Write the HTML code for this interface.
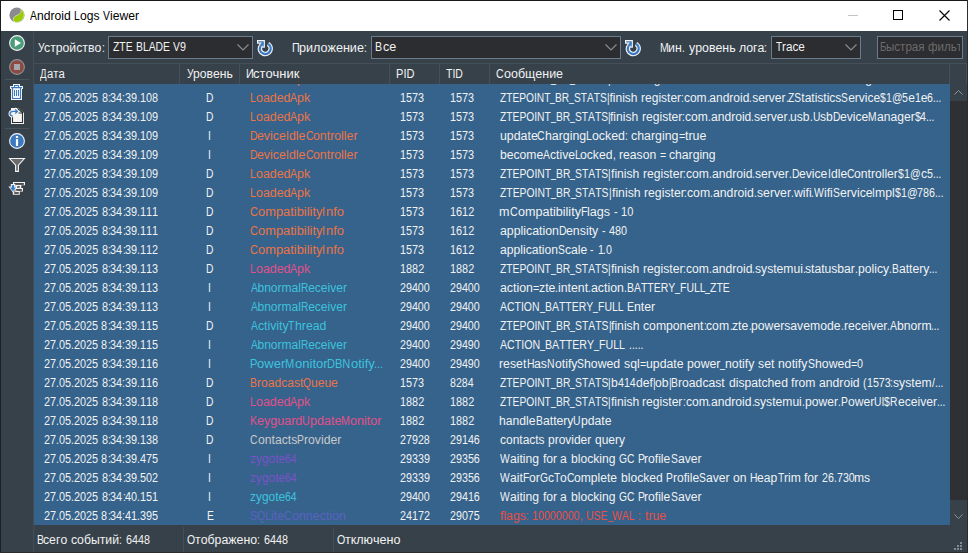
<!DOCTYPE html>
<html><head><meta charset="utf-8">
<style>
html,body{margin:0;padding:0}
body{width:968px;height:553px;overflow:hidden;position:relative;background:#37414a;font-family:"Liberation Sans",sans-serif;font-size:12px}
.r{position:absolute}
.t{position:absolute;white-space:pre;line-height:30px;height:30px;transform-origin:0 0;font-size:12px;font-kerning:none;font-variant-ligatures:none}
.g{position:absolute;left:0;top:0}
.clip{position:absolute;overflow:hidden}
svg{position:absolute;overflow:visible}
</style></head><body>
<!-- title bar -->
<div class="r" style="left:0;top:0;width:968px;height:31px;background:#fff"></div>
<!-- borders -->
<div class="r" style="left:0;top:0;width:968px;height:1px;background:#16191c"></div>
<div class="r" style="left:0;top:0;width:1px;height:553px;background:#1c1f22"></div>
<div class="r" style="left:967px;top:0;width:1px;height:553px;background:#2a2c2f"></div>
<div class="r" style="left:0;top:552px;width:968px;height:1px;background:#2a2c2f"></div>
<!-- title icon -->
<svg style="left:9px;top:7px" width="16" height="16" viewBox="0 0 16 16">
 <circle cx="8" cy="8" r="7.6" fill="#8b8b8f"/>
 <path d="M10.9 0.9 C12.8 2.6 12.6 6.0 9.8 7.4 C7.2 8.6 4.2 9.8 4.4 12.2 C4.5 13.4 4.9 14.3 5.4 15.0 A7.6 7.6 0 0 0 10.9 0.9 Z" fill="#99cc00" stroke="#ffffff" stroke-width="0.5"/>
</svg>
<!-- window controls -->
<div class="r" style="left:848px;top:15px;width:10px;height:1px;background:#c4c4c4"></div>
<div class="r" style="left:893px;top:10px;width:8px;height:8px;border:1px solid #000"></div>
<svg style="left:939px;top:10px" width="11" height="11" viewBox="0 0 11 11"><path d="M0.5 0.5 L10.5 10.5 M10.5 0.5 L0.5 10.5" stroke="#000" stroke-width="1.1"/></svg>

<!-- left toolbar divider -->
<div class="r" style="left:33px;top:31px;width:1px;height:521px;background:#434e58"></div>
<div class="r" style="left:5px;top:79px;width:24px;height:1px;background:#4a555f"></div>
<div class="r" style="left:5px;top:128px;width:24px;height:1px;background:#4a555f"></div>
<!-- play -->
<svg style="left:9px;top:35px" width="16" height="16" viewBox="0 0 16 16">
 <circle cx="8" cy="8" r="7.4" fill="#4a9d78" stroke="#f4f4f4" stroke-width="1.1"/>
 <path d="M5.8 4.2 L12.0 8 L5.8 11.8 Z" fill="#ffffff"/>
</svg>
<!-- stop -->
<svg style="left:9px;top:59px" width="16" height="16" viewBox="0 0 16 16">
 <circle cx="8" cy="8" r="7.4" fill="#8c4a42" stroke="#8e9196" stroke-width="1.1"/>
 <rect x="5" y="5" width="6" height="6" fill="#a4a8ad"/>
</svg>
<!-- trash -->
<svg style="left:7px;top:82px" width="20" height="20" viewBox="0 0 20 20">
 <path d="M6 2 H13 V4 H16 V7 H15 V18 H4 V7 H3 V4 H6 Z" fill="#f4f4f4"/>
 <rect x="7.5" y="3.5" width="4" height="2" fill="none" stroke="#3b7bc6" stroke-width="1"/>
 <rect x="4" y="5" width="11" height="1.2" fill="#3b7bc6"/>
 <path d="M5.5 6 V16.5 H13.5 V6" fill="none" stroke="#3b7bc6" stroke-width="1.1"/>
 <rect x="7" y="8" width="1" height="6" fill="#3b7bc6"/>
 <rect x="9" y="8" width="1" height="6" fill="#3b7bc6"/>
 <rect x="11" y="8" width="1" height="6" fill="#3b7bc6"/>
</svg>
<!-- document -->
<svg style="left:7px;top:105px" width="20" height="20" viewBox="0 0 20 20">
 <path d="M4 3 H11 L17 8 V19 H4 Z" fill="#f4f4f4"/>
 <path d="M5.5 11.5 V17.5 H15.5 V7" fill="none" stroke="#2a2b2d" stroke-width="1.1"/>
 <path d="M10.3 3.6 L15.8 7.8" fill="none" stroke="#2a2b2d" stroke-width="1.2"/>
 <path d="M11.5 4.2 V8 H15.5" fill="none" stroke="#2a2b2d" stroke-width="1"/>
 <path d="M5.6 10.9 C2.2 10.6 2.2 6.4 6.2 6.4 H10" fill="none" stroke="#f4f4f4" stroke-width="3.2"/>
 <path d="M7.8 3.6 L10.8 6.4 L7.8 9.2" fill="none" stroke="#f4f4f4" stroke-width="3"/>
 <path d="M5.6 10.9 C2.2 10.6 2.2 6.4 6.2 6.4 H10" fill="none" stroke="#3b7bc6" stroke-width="1.3"/>
 <path d="M8.2 4.4 L10.4 6.4 L8.2 8.4" fill="none" stroke="#3b7bc6" stroke-width="1.3"/>
</svg>
<!-- info -->
<svg style="left:9px;top:133px" width="16" height="16" viewBox="0 0 16 16">
 <circle cx="8" cy="8" r="7.4" fill="#3a78c0" stroke="#f4f4f4" stroke-width="1.1"/>
 <rect x="6.9" y="6.1" width="2.2" height="6.9" fill="#fff"/>
 <rect x="6.9" y="3.0" width="2.2" height="2.0" fill="#fff"/>
</svg>
<!-- filter -->
<svg style="left:7px;top:155px" width="20" height="20" viewBox="0 0 20 20">
 <path d="M2.6 3.5 H17.4 L11.4 10.2 V16.4 H8.6 V10.2 Z" fill="#6b6b6b" stroke="#f4f4f4" stroke-width="1.1" stroke-linejoin="miter"/>
</svg>
<!-- export -->
<svg style="left:7px;top:178px" width="20" height="20" viewBox="0 0 20 20">
 <path d="M6 4 H18 V7.2 H14.3 V10.1 H16 V13.4 H12.8 V16.8 H5.8 V13.4 H8.3 V7.2 H6 Z" fill="#f4f4f4"/>
 <rect x="7.2" y="5.2" width="9.6" height="1.5" fill="#1e1f21"/>
 <rect x="10.1" y="8.3" width="2.6" height="1.3" fill="#1e1f21"/>
 <rect x="9.2" y="11.2" width="5.6" height="1.5" fill="#1e1f21"/>
 <rect x="7.2" y="14.3" width="4.6" height="1.4" fill="#1e1f21"/>
 <path d="M3.8 6 H8.2 V8.4 H10.6 L6 14.6 L1.4 8.4 H3.8 Z" fill="#f4f4f4"/>
 <path d="M4.9 7 H7.1 V9.4 H9.0 L6 13.3 L3.0 9.4 H4.9 Z" fill="#3a7bc6"/>
</svg>

<!-- toolbar bottom / header top line -->
<div class="r" style="left:34px;top:63px;width:933px;height:1px;background:#44515b"></div>
<!-- comboboxes -->
<div class="r" style="left:108px;top:36px;width:143px;height:21px;border:1px solid #6b7c8a;background:#2c2d31"></div>
<div class="r" style="left:371px;top:36px;width:248px;height:21px;border:1px solid #6b7c8a;background:#2c2d31"></div>
<div class="r" style="left:771px;top:36px;width:88px;height:21px;border:1px solid #6b7c8a;background:#2c2d31"></div>
<div class="r" style="left:877px;top:36px;width:84px;height:21px;border:1px solid #6b7c8a;background:#2c2d31"></div>
<svg style="left:237px;top:44px" width="12" height="7" viewBox="0 0 12 7"><path d="M0.5 0.5 L6 6 L11.5 0.5" fill="none" stroke="#8a9096" stroke-width="1.1"/></svg>
<svg style="left:605px;top:44px" width="12" height="7" viewBox="0 0 12 7"><path d="M0.5 0.5 L6 6 L11.5 0.5" fill="none" stroke="#8a9096" stroke-width="1.1"/></svg>
<svg style="left:845px;top:44px" width="12" height="7" viewBox="0 0 12 7"><path d="M0.5 0.5 L6 6 L11.5 0.5" fill="none" stroke="#8a9096" stroke-width="1.1"/></svg>
<!-- refresh icons -->
<svg style="left:257px;top:40px" width="16" height="16" viewBox="0 0 16 16">
 <path d="M11.0 3.92 A5.4 5.4 0 1 1 3.23 6.75" fill="none" stroke="#f4f4f4" stroke-width="4.6"/>
 <path d="M0 0 H7.9 V7.8 H5.2 L3.4 8.8 L1.0 6.4 L2.6 3.8 H0 Z" fill="#f4f4f4"/>
 <path d="M11.0 3.92 A5.4 5.4 0 1 1 3.23 6.75" fill="none" stroke="#3b7bc6" stroke-width="2.3"/>
 <path d="M3.1 6.7 L6.0 2.4" fill="none" stroke="#3b7bc6" stroke-width="2"/>
 <path d="M1.2 1.2 H6.75 V6.55 H5.35 V2.6 H1.2 Z" fill="#3b7bc6"/>
</svg>
<svg style="left:625px;top:40px" width="16" height="16" viewBox="0 0 16 16">
 <path d="M11.0 3.92 A5.4 5.4 0 1 1 3.23 6.75" fill="none" stroke="#f4f4f4" stroke-width="4.6"/>
 <path d="M0 0 H7.9 V7.8 H5.2 L3.4 8.8 L1.0 6.4 L2.6 3.8 H0 Z" fill="#f4f4f4"/>
 <path d="M11.0 3.92 A5.4 5.4 0 1 1 3.23 6.75" fill="none" stroke="#3b7bc6" stroke-width="2.3"/>
 <path d="M3.1 6.7 L6.0 2.4" fill="none" stroke="#3b7bc6" stroke-width="2"/>
 <path d="M1.2 1.2 H6.75 V6.55 H5.35 V2.6 H1.2 Z" fill="#3b7bc6"/>
</svg>

<!-- header separators -->
<div class="r" style="left:179px;top:64px;width:1px;height:20px;background:#44505a"></div>
<div class="r" style="left:239px;top:64px;width:1px;height:20px;background:#44505a"></div>
<div class="r" style="left:389px;top:64px;width:1px;height:20px;background:#44505a"></div>
<div class="r" style="left:439px;top:64px;width:1px;height:20px;background:#44505a"></div>
<div class="r" style="left:489px;top:64px;width:1px;height:20px;background:#44505a"></div>
<div class="r" style="left:949px;top:64px;width:1px;height:20px;background:#44505a"></div>
<div class="r" style="left:966px;top:64px;width:1px;height:20px;background:#44505a"></div>

<!-- table body -->
<div class="r" style="left:34px;top:84px;width:916px;height:441px;background:#35638c"></div>
<!-- scrollbar -->
<div class="r" style="left:950px;top:84px;width:17px;height:441px;background:#2e3034"></div>
<div class="r" style="left:950px;top:84px;width:17px;height:17px;background:#37414a"></div>
<div class="r" style="left:950px;top:500px;width:17px;height:25px;background:#37414a"></div>
<svg style="left:954px;top:90px" width="9" height="5" viewBox="0 0 9 5"><path d="M0.4 4.6 L4.5 0.5 L8.6 4.6" fill="none" stroke="#8e9399" stroke-width="1"/></svg>
<svg style="left:954px;top:514px" width="9" height="5" viewBox="0 0 9 5"><path d="M0.4 0.4 L4.5 4.5 L8.6 0.4" fill="none" stroke="#8e9399" stroke-width="1"/></svg>

<!-- status bar separators -->
<div class="r" style="left:183px;top:527px;width:1px;height:25px;background:#434e58"></div>
<div class="r" style="left:333px;top:527px;width:1px;height:25px;background:#434e58"></div>
<!-- grip -->
<div class="r" style="left:960px;top:542px;width:2px;height:2px;background:#858b91"></div>
<div class="r" style="left:957px;top:545px;width:2px;height:2px;background:#858b91"></div>
<div class="r" style="left:960px;top:545px;width:2px;height:2px;background:#858b91"></div>
<div class="r" style="left:954px;top:548px;width:2px;height:2px;background:#858b91"></div>
<div class="r" style="left:957px;top:548px;width:2px;height:2px;background:#858b91"></div>
<div class="r" style="left:960px;top:548px;width:2px;height:2px;background:#858b91"></div>

<div class="g" style="color:#000000"><span class="t" style="left:29.98px;top:1px;transform:scaleX(0.8584)">A</span><span class="t" style="left:36.85px;top:1px;transform:scaleX(1.0118)">ndroid</span><span class="t" style="left:74.16px;top:1px;transform:scaleX(0.8584)">L</span><span class="t" style="left:79.89px;top:1px;transform:scaleX(1.0118)">ogs</span><span class="t" style="left:103.02px;top:1px;transform:scaleX(0.8584)">V</span><span class="t" style="left:109.89px;top:1px;transform:scaleX(1.0118)">iewer</span></div>
<div class="g" style="color:#f2f2f2"><span class="t" style="left:37.72px;top:33px;transform:scaleX(0.8663)">У</span><span class="t" style="left:44.32px;top:33px;transform:scaleX(1.0212)">стройство</span><span class="t" style="left:101.60px;top:33px;transform:scaleX(0.8471)">:</span></div>
<div class="g" style="color:#f2f2f2"><span class="t" style="left:112.67px;top:32px;transform:scaleX(0.8632)">ZTE</span><span class="t" style="left:135.81px;top:32px;transform:scaleX(0.8632)">BLADE</span><span class="t" style="left:173.35px;top:32px;transform:scaleX(0.8632)">V</span><span class="t" style="left:180.26px;top:32px;transform:scaleX(0.8914)">9</span></div>
<div class="g" style="color:#f2f2f2"><span class="t" style="left:291.53px;top:33px;transform:scaleX(0.8918)">П</span><span class="t" style="left:299.22px;top:33px;transform:scaleX(1.0513)">риложение</span><span class="t" style="left:364.15px;top:33px;transform:scaleX(0.8721)">:</span></div>
<div class="g" style="color:#f2f2f2"><span class="t" style="left:375.43px;top:32px;transform:scaleX(0.8861)">В</span><span class="t" style="left:382.52px;top:32px;transform:scaleX(1.0444)">се</span></div>
<div class="g" style="color:#f2f2f2"><span class="t" style="left:659.74px;top:33px;transform:scaleX(0.8730)">М</span><span class="t" style="left:668.47px;top:33px;transform:scaleX(1.0290)">ин</span><span class="t" style="left:682.18px;top:33px;transform:scaleX(0.8536)">.</span><span class="t" style="left:688.64px;top:33px;transform:scaleX(1.0290)">уровень</span><span class="t" style="left:738.85px;top:33px;transform:scaleX(1.0290)">лога</span><span class="t" style="left:764.29px;top:33px;transform:scaleX(0.8536)">:</span></div>
<div class="g" style="color:#f2f2f2"><span class="t" style="left:775.68px;top:32px;transform:scaleX(0.8307)">T</span><span class="t" style="left:781.77px;top:32px;transform:scaleX(0.9792)">race</span></div>
<div class="clip" style="left:878px;top:37px;width:82px;height:21px;color:#6d6b69"><span class="t" style="left:1.79px;top:-5px;transform:scaleX(0.8186)">Б</span><span class="t" style="left:8.24px;top:-5px;transform:scaleX(0.9649)">ыстрая</span><span class="t" style="left:50.19px;top:-5px;transform:scaleX(0.9649)">фильтрация</span></div>
<div class="g" style="color:#f2f2f2"><span class="t" style="left:40.13px;top:59px;transform:scaleX(0.8000)">Д</span><span class="t" style="left:46.63px;top:59px;transform:scaleX(0.9430)">ата</span></div>
<div class="g" style="color:#f2f2f2"><span class="t" style="left:186.92px;top:59px;transform:scaleX(0.8582)">У</span><span class="t" style="left:193.47px;top:59px;transform:scaleX(1.0116)">ровень</span></div>
<div class="g" style="color:#f2f2f2"><span class="t" style="left:245.50px;top:59px;transform:scaleX(0.9161)">И</span><span class="t" style="left:253.40px;top:59px;transform:scaleX(1.0799)">сточник</span></div>
<div class="g" style="color:#f2f2f2"><span class="t" style="left:395.79px;top:59px;transform:scaleX(0.9216)">PID</span></div>
<div class="g" style="color:#f2f2f2"><span class="t" style="left:446.07px;top:59px;transform:scaleX(0.8709)">TID</span></div>
<div class="g" style="color:#f2f2f2"><span class="t" style="left:495.86px;top:59px;transform:scaleX(0.8824)">С</span><span class="t" style="left:503.51px;top:59px;transform:scaleX(1.0401)">ообщение</span></div>
<div class="g" style="color:#f2f2f2"><span class="t" style="left:36.55px;top:525px;transform:scaleX(0.8648)">В</span><span class="t" style="left:43.47px;top:525px;transform:scaleX(1.0194)">сего</span><span class="t" style="left:71.24px;top:525px;transform:scaleX(1.0194)">событий</span><span class="t" style="left:119.22px;top:525px;transform:scaleX(0.8456)">:</span><span class="t" style="left:125.62px;top:525px;transform:scaleX(0.8931)">6448</span></div>
<div class="g" style="color:#f2f2f2"><span class="t" style="left:186.90px;top:525px;transform:scaleX(0.8716)">О</span><span class="t" style="left:195.04px;top:525px;transform:scaleX(1.0274)">тображено</span><span class="t" style="left:257.09px;top:525px;transform:scaleX(0.8523)">:</span><span class="t" style="left:263.54px;top:525px;transform:scaleX(0.9001)">6448</span></div>
<div class="g" style="color:#f2f2f2"><span class="t" style="left:337.00px;top:525px;transform:scaleX(0.8879)">О</span><span class="t" style="left:345.28px;top:525px;transform:scaleX(1.0466)">тключено</span></div>
<div class="g" style="color:#f2f2f2"><span class="t" style="left:43.85px;top:83px;transform:scaleX(0.9048)">27</span><span class="t" style="left:55.93px;top:83px;transform:scaleX(0.8566)">.</span><span class="t" style="left:58.79px;top:83px;transform:scaleX(0.9048)">05</span><span class="t" style="left:70.86px;top:83px;transform:scaleX(0.8566)">.</span><span class="t" style="left:73.72px;top:83px;transform:scaleX(0.9048)">2025</span><span class="t" style="left:101.50px;top:83px;transform:scaleX(0.9048)">8</span><span class="t" style="left:107.54px;top:83px;transform:scaleX(0.8566)">:</span><span class="t" style="left:110.39px;top:83px;transform:scaleX(0.9048)">34</span><span class="t" style="left:122.47px;top:83px;transform:scaleX(0.8566)">:</span><span class="t" style="left:125.33px;top:83px;transform:scaleX(0.9048)">39</span><span class="t" style="left:137.40px;top:83px;transform:scaleX(0.8566)">.</span><span class="t" style="left:140.26px;top:83px;transform:scaleX(0.9048)">108</span></div>
<div class="g" style="color:#f2f2f2"><span class="t" style="left:206.42px;top:83px;transform:scaleX(0.8560)">D</span></div>
<div class="g" style="color:#ec7446"><span class="t" style="left:249.84px;top:83px;transform:scaleX(0.8766)">L</span><span class="t" style="left:255.69px;top:83px;transform:scaleX(1.0333)">oaded</span><span class="t" style="left:290.17px;top:83px;transform:scaleX(0.8766)">A</span><span class="t" style="left:297.19px;top:83px;transform:scaleX(1.0333)">pk</span></div>
<div class="g" style="color:#f2f2f2"><span class="t" style="left:400.07px;top:83px;transform:scaleX(0.9028)">1573</span></div>
<div class="g" style="color:#f2f2f2"><span class="t" style="left:449.87px;top:83px;transform:scaleX(0.9028)">1573</span></div>
<div class="g" style="color:#f2f2f2"><span class="t" style="left:499.98px;top:83px;transform:scaleX(0.8490)">ZTEPOINT</span><span class="t" style="left:550.35px;top:82px;transform:scaleX(0.7201)">_</span><span class="t" style="left:555.16px;top:83px;transform:scaleX(0.8490)">BR</span><span class="t" style="left:569.31px;top:82px;transform:scaleX(0.7201)">_</span><span class="t" style="left:574.11px;top:83px;transform:scaleX(0.8490)">STATS</span><span class="t" style="left:606.95px;top:83px;transform:scaleX(0.8302)">|</span><span class="t" style="left:609.53px;top:83px">finish</span><span class="t" style="left:641.08px;top:83px">register</span><span class="t" style="left:681.13px;top:83px;transform:scaleX(0.8302)">:</span><span class="t" style="left:683.90px;top:83px">com</span><span class="t" style="left:706.58px;top:83px;transform:scaleX(0.8302)">.</span><span class="t" style="left:709.35px;top:83px">android</span><span class="t" style="left:749.41px;top:83px;transform:scaleX(0.8302)">.</span><span class="t" style="left:752.18px;top:83px">server</span><span class="t" style="left:785.54px;top:83px;transform:scaleX(0.8302)">.</span><span class="t" style="left:788.31px;top:83px;transform:scaleX(0.8490)">ZS</span><span class="t" style="left:801.33px;top:83px">tatistics</span><span class="t" style="left:841.37px;top:83px;transform:scaleX(0.8490)">S</span><span class="t" style="left:848.16px;top:83px">ervice</span><span class="t" style="left:880.20px;top:83px;transform:scaleX(0.8669)">$</span><span class="t" style="left:885.98px;top:83px;transform:scaleX(0.8768)">1</span><span class="t" style="left:891.83px;top:83px;transform:scaleX(0.8669)">@</span><span class="t" style="left:902.39px;top:83px;transform:scaleX(0.8768)">5</span><span class="t" style="left:908.25px;top:83px">e</span><span class="t" style="left:914.92px;top:83px;transform:scaleX(0.8768)">1</span><span class="t" style="left:920.78px;top:83px">e</span><span class="t" style="left:927.45px;top:83px;transform:scaleX(0.8768)">6</span><span class="t" style="left:933.31px;top:83px;transform:scaleX(0.8302)">...</span></div>
<div class="g" style="color:#f2f2f2"><span class="t" style="left:43.85px;top:102px;transform:scaleX(0.9051)">27</span><span class="t" style="left:55.93px;top:102px;transform:scaleX(0.8570)">.</span><span class="t" style="left:58.79px;top:102px;transform:scaleX(0.9051)">05</span><span class="t" style="left:70.87px;top:102px;transform:scaleX(0.8570)">.</span><span class="t" style="left:73.73px;top:102px;transform:scaleX(0.9051)">2025</span><span class="t" style="left:101.52px;top:102px;transform:scaleX(0.9051)">8</span><span class="t" style="left:107.56px;top:102px;transform:scaleX(0.8570)">:</span><span class="t" style="left:110.42px;top:102px;transform:scaleX(0.9051)">34</span><span class="t" style="left:122.50px;top:102px;transform:scaleX(0.8570)">:</span><span class="t" style="left:125.36px;top:102px;transform:scaleX(0.9051)">39</span><span class="t" style="left:137.44px;top:102px;transform:scaleX(0.8570)">.</span><span class="t" style="left:140.29px;top:102px;transform:scaleX(0.9051)">109</span></div>
<div class="g" style="color:#f2f2f2"><span class="t" style="left:206.42px;top:102px;transform:scaleX(0.8560)">D</span></div>
<div class="g" style="color:#ec7446"><span class="t" style="left:249.84px;top:102px;transform:scaleX(0.8766)">L</span><span class="t" style="left:255.69px;top:102px;transform:scaleX(1.0333)">oaded</span><span class="t" style="left:290.17px;top:102px;transform:scaleX(0.8766)">A</span><span class="t" style="left:297.19px;top:102px;transform:scaleX(1.0333)">pk</span></div>
<div class="g" style="color:#f2f2f2"><span class="t" style="left:400.07px;top:102px;transform:scaleX(0.9028)">1573</span></div>
<div class="g" style="color:#f2f2f2"><span class="t" style="left:449.87px;top:102px;transform:scaleX(0.9028)">1573</span></div>
<div class="g" style="color:#f2f2f2"><span class="t" style="left:499.97px;top:102px;transform:scaleX(0.8549)">ZTEPOINT</span><span class="t" style="left:550.70px;top:101px;transform:scaleX(0.7251)">_</span><span class="t" style="left:555.54px;top:102px;transform:scaleX(0.8549)">BR</span><span class="t" style="left:569.79px;top:101px;transform:scaleX(0.7251)">_</span><span class="t" style="left:574.63px;top:102px;transform:scaleX(0.8549)">STATS</span><span class="t" style="left:607.69px;top:102px;transform:scaleX(0.8360)">|</span><span class="t" style="left:610.30px;top:102px;transform:scaleX(1.0078)">finish</span><span class="t" style="left:642.07px;top:102px;transform:scaleX(1.0078)">register</span><span class="t" style="left:682.39px;top:102px;transform:scaleX(0.8360)">:</span><span class="t" style="left:685.18px;top:102px;transform:scaleX(1.0078)">com</span><span class="t" style="left:708.03px;top:102px;transform:scaleX(0.8360)">.</span><span class="t" style="left:710.81px;top:102px;transform:scaleX(1.0078)">android</span><span class="t" style="left:751.16px;top:102px;transform:scaleX(0.8360)">.</span><span class="t" style="left:753.94px;top:102px;transform:scaleX(1.0078)">server</span><span class="t" style="left:787.54px;top:102px;transform:scaleX(0.8360)">.</span><span class="t" style="left:790.33px;top:102px;transform:scaleX(1.0078)">usb</span><span class="t" style="left:809.83px;top:102px;transform:scaleX(0.8360)">.</span><span class="t" style="left:812.61px;top:102px;transform:scaleX(0.8549)">U</span><span class="t" style="left:820.02px;top:102px;transform:scaleX(1.0078)">sb</span><span class="t" style="left:832.79px;top:102px;transform:scaleX(0.8549)">D</span><span class="t" style="left:840.20px;top:102px;transform:scaleX(1.0078)">evice</span><span class="t" style="left:868.44px;top:102px;transform:scaleX(0.8549)">M</span><span class="t" style="left:876.98px;top:102px;transform:scaleX(1.0078)">anager</span><span class="t" style="left:914.64px;top:102px;transform:scaleX(0.8729)">$</span><span class="t" style="left:920.46px;top:102px;transform:scaleX(0.8829)">4</span><span class="t" style="left:926.35px;top:102px;transform:scaleX(0.8360)">...</span></div>
<div class="g" style="color:#f2f2f2"><span class="t" style="left:43.85px;top:121px;transform:scaleX(0.9051)">27</span><span class="t" style="left:55.93px;top:121px;transform:scaleX(0.8570)">.</span><span class="t" style="left:58.79px;top:121px;transform:scaleX(0.9051)">05</span><span class="t" style="left:70.87px;top:121px;transform:scaleX(0.8570)">.</span><span class="t" style="left:73.73px;top:121px;transform:scaleX(0.9051)">2025</span><span class="t" style="left:101.52px;top:121px;transform:scaleX(0.9051)">8</span><span class="t" style="left:107.56px;top:121px;transform:scaleX(0.8570)">:</span><span class="t" style="left:110.42px;top:121px;transform:scaleX(0.9051)">34</span><span class="t" style="left:122.50px;top:121px;transform:scaleX(0.8570)">:</span><span class="t" style="left:125.36px;top:121px;transform:scaleX(0.9051)">39</span><span class="t" style="left:137.44px;top:121px;transform:scaleX(0.8570)">.</span><span class="t" style="left:140.29px;top:121px;transform:scaleX(0.9051)">109</span></div>
<div class="g" style="color:#f2f2f2"><span class="t" style="left:208.37px;top:121px;transform:scaleX(0.8560)">I</span></div>
<div class="g" style="color:#ec7446"><span class="t" style="left:249.84px;top:121px;transform:scaleX(0.8714)">D</span><span class="t" style="left:257.39px;top:121px;transform:scaleX(1.0272)">evice</span><span class="t" style="left:286.17px;top:121px;transform:scaleX(0.8714)">I</span><span class="t" style="left:289.07px;top:121px;transform:scaleX(1.0272)">dle</span><span class="t" style="left:305.52px;top:121px;transform:scaleX(0.8714)">C</span><span class="t" style="left:313.07px;top:121px;transform:scaleX(1.0272)">ontroller</span></div>
<div class="g" style="color:#f2f2f2"><span class="t" style="left:400.07px;top:121px;transform:scaleX(0.9028)">1573</span></div>
<div class="g" style="color:#f2f2f2"><span class="t" style="left:449.87px;top:121px;transform:scaleX(0.9028)">1573</span></div>
<div class="g" style="color:#f2f2f2"><span class="t" style="left:499.50px;top:121px;transform:scaleX(1.0300)">update</span><span class="t" style="left:537.30px;top:121px;transform:scaleX(0.8738)">C</span><span class="t" style="left:544.87px;top:121px;transform:scaleX(1.0300)">harging</span><span class="t" style="left:586.11px;top:121px;transform:scaleX(0.8738)">L</span><span class="t" style="left:591.94px;top:121px;transform:scaleX(1.0300)">ocked</span><span class="t" style="left:624.92px;top:121px;transform:scaleX(0.8544)">:</span><span class="t" style="left:631.39px;top:121px;transform:scaleX(1.0300)">charging</span><span class="t" style="left:678.80px;top:121px;transform:scaleX(0.8922)">=</span><span class="t" style="left:685.05px;top:121px;transform:scaleX(1.0300)">true</span></div>
<div class="g" style="color:#f2f2f2"><span class="t" style="left:43.85px;top:140px;transform:scaleX(0.9051)">27</span><span class="t" style="left:55.93px;top:140px;transform:scaleX(0.8570)">.</span><span class="t" style="left:58.79px;top:140px;transform:scaleX(0.9051)">05</span><span class="t" style="left:70.87px;top:140px;transform:scaleX(0.8570)">.</span><span class="t" style="left:73.73px;top:140px;transform:scaleX(0.9051)">2025</span><span class="t" style="left:101.52px;top:140px;transform:scaleX(0.9051)">8</span><span class="t" style="left:107.56px;top:140px;transform:scaleX(0.8570)">:</span><span class="t" style="left:110.42px;top:140px;transform:scaleX(0.9051)">34</span><span class="t" style="left:122.50px;top:140px;transform:scaleX(0.8570)">:</span><span class="t" style="left:125.36px;top:140px;transform:scaleX(0.9051)">39</span><span class="t" style="left:137.44px;top:140px;transform:scaleX(0.8570)">.</span><span class="t" style="left:140.29px;top:140px;transform:scaleX(0.9051)">109</span></div>
<div class="g" style="color:#f2f2f2"><span class="t" style="left:208.37px;top:140px;transform:scaleX(0.8560)">I</span></div>
<div class="g" style="color:#ec7446"><span class="t" style="left:249.84px;top:140px;transform:scaleX(0.8714)">D</span><span class="t" style="left:257.39px;top:140px;transform:scaleX(1.0272)">evice</span><span class="t" style="left:286.17px;top:140px;transform:scaleX(0.8714)">I</span><span class="t" style="left:289.07px;top:140px;transform:scaleX(1.0272)">dle</span><span class="t" style="left:305.52px;top:140px;transform:scaleX(0.8714)">C</span><span class="t" style="left:313.07px;top:140px;transform:scaleX(1.0272)">ontroller</span></div>
<div class="g" style="color:#f2f2f2"><span class="t" style="left:400.07px;top:140px;transform:scaleX(0.9028)">1573</span></div>
<div class="g" style="color:#f2f2f2"><span class="t" style="left:449.87px;top:140px;transform:scaleX(0.9028)">1573</span></div>
<div class="g" style="color:#f2f2f2"><span class="t" style="left:499.52px;top:140px;transform:scaleX(1.0123)">become</span><span class="t" style="left:542.73px;top:140px;transform:scaleX(0.8588)">A</span><span class="t" style="left:549.61px;top:140px;transform:scaleX(1.0123)">ctive</span><span class="t" style="left:574.58px;top:140px;transform:scaleX(0.8588)">L</span><span class="t" style="left:580.32px;top:140px;transform:scaleX(1.0123)">ocked</span><span class="t" style="left:612.73px;top:140px;transform:scaleX(0.8397)">,</span><span class="t" style="left:619.09px;top:140px;transform:scaleX(1.0123)">reason</span><span class="t" style="left:659.79px;top:140px;transform:scaleX(0.8769)">=</span><span class="t" style="left:669.49px;top:140px;transform:scaleX(1.0123)">charging</span></div>
<div class="g" style="color:#f2f2f2"><span class="t" style="left:43.85px;top:159px;transform:scaleX(0.9051)">27</span><span class="t" style="left:55.93px;top:159px;transform:scaleX(0.8570)">.</span><span class="t" style="left:58.79px;top:159px;transform:scaleX(0.9051)">05</span><span class="t" style="left:70.87px;top:159px;transform:scaleX(0.8570)">.</span><span class="t" style="left:73.73px;top:159px;transform:scaleX(0.9051)">2025</span><span class="t" style="left:101.52px;top:159px;transform:scaleX(0.9051)">8</span><span class="t" style="left:107.56px;top:159px;transform:scaleX(0.8570)">:</span><span class="t" style="left:110.42px;top:159px;transform:scaleX(0.9051)">34</span><span class="t" style="left:122.50px;top:159px;transform:scaleX(0.8570)">:</span><span class="t" style="left:125.36px;top:159px;transform:scaleX(0.9051)">39</span><span class="t" style="left:137.44px;top:159px;transform:scaleX(0.8570)">.</span><span class="t" style="left:140.29px;top:159px;transform:scaleX(0.9051)">109</span></div>
<div class="g" style="color:#f2f2f2"><span class="t" style="left:206.42px;top:159px;transform:scaleX(0.8560)">D</span></div>
<div class="g" style="color:#ec7446"><span class="t" style="left:249.84px;top:159px;transform:scaleX(0.8766)">L</span><span class="t" style="left:255.69px;top:159px;transform:scaleX(1.0333)">oaded</span><span class="t" style="left:290.17px;top:159px;transform:scaleX(0.8766)">A</span><span class="t" style="left:297.19px;top:159px;transform:scaleX(1.0333)">pk</span></div>
<div class="g" style="color:#f2f2f2"><span class="t" style="left:400.07px;top:159px;transform:scaleX(0.9028)">1573</span></div>
<div class="g" style="color:#f2f2f2"><span class="t" style="left:449.87px;top:159px;transform:scaleX(0.9028)">1573</span></div>
<div class="g" style="color:#f2f2f2"><span class="t" style="left:499.97px;top:159px;transform:scaleX(0.8595)">ZTEPOINT</span><span class="t" style="left:550.97px;top:158px;transform:scaleX(0.7289)">_</span><span class="t" style="left:555.83px;top:159px;transform:scaleX(0.8595)">BR</span><span class="t" style="left:570.16px;top:158px;transform:scaleX(0.7289)">_</span><span class="t" style="left:575.02px;top:159px;transform:scaleX(0.8595)">STATS</span><span class="t" style="left:608.26px;top:159px;transform:scaleX(0.8404)">|</span><span class="t" style="left:610.88px;top:159px;transform:scaleX(1.0131)">finish</span><span class="t" style="left:642.82px;top:159px;transform:scaleX(1.0131)">register</span><span class="t" style="left:683.35px;top:159px;transform:scaleX(0.8404)">:</span><span class="t" style="left:686.16px;top:159px;transform:scaleX(1.0131)">com</span><span class="t" style="left:709.12px;top:159px;transform:scaleX(0.8404)">.</span><span class="t" style="left:711.92px;top:159px;transform:scaleX(1.0131)">android</span><span class="t" style="left:752.48px;top:159px;transform:scaleX(0.8404)">.</span><span class="t" style="left:755.28px;top:159px;transform:scaleX(1.0131)">server</span><span class="t" style="left:789.06px;top:159px;transform:scaleX(0.8404)">.</span><span class="t" style="left:791.86px;top:159px;transform:scaleX(0.8595)">D</span><span class="t" style="left:799.31px;top:159px;transform:scaleX(1.0131)">evice</span><span class="t" style="left:827.69px;top:159px;transform:scaleX(0.8595)">I</span><span class="t" style="left:830.55px;top:159px;transform:scaleX(1.0131)">dle</span><span class="t" style="left:846.78px;top:159px;transform:scaleX(0.8595)">C</span><span class="t" style="left:854.22px;top:159px;transform:scaleX(1.0131)">ontroller</span><span class="t" style="left:898.14px;top:159px;transform:scaleX(0.8775)">$</span><span class="t" style="left:904.00px;top:159px;transform:scaleX(0.8876)">1</span><span class="t" style="left:909.92px;top:159px;transform:scaleX(0.8775)">@</span><span class="t" style="left:920.61px;top:159px;transform:scaleX(1.0131)">c</span><span class="t" style="left:926.69px;top:159px;transform:scaleX(0.8876)">5</span><span class="t" style="left:932.62px;top:159px;transform:scaleX(0.8404)">...</span></div>
<div class="g" style="color:#f2f2f2"><span class="t" style="left:43.85px;top:178px;transform:scaleX(0.9051)">27</span><span class="t" style="left:55.93px;top:178px;transform:scaleX(0.8570)">.</span><span class="t" style="left:58.79px;top:178px;transform:scaleX(0.9051)">05</span><span class="t" style="left:70.87px;top:178px;transform:scaleX(0.8570)">.</span><span class="t" style="left:73.73px;top:178px;transform:scaleX(0.9051)">2025</span><span class="t" style="left:101.52px;top:178px;transform:scaleX(0.9051)">8</span><span class="t" style="left:107.56px;top:178px;transform:scaleX(0.8570)">:</span><span class="t" style="left:110.42px;top:178px;transform:scaleX(0.9051)">34</span><span class="t" style="left:122.50px;top:178px;transform:scaleX(0.8570)">:</span><span class="t" style="left:125.36px;top:178px;transform:scaleX(0.9051)">39</span><span class="t" style="left:137.44px;top:178px;transform:scaleX(0.8570)">.</span><span class="t" style="left:140.29px;top:178px;transform:scaleX(0.9051)">109</span></div>
<div class="g" style="color:#f2f2f2"><span class="t" style="left:206.42px;top:178px;transform:scaleX(0.8560)">D</span></div>
<div class="g" style="color:#ec7446"><span class="t" style="left:249.84px;top:178px;transform:scaleX(0.8766)">L</span><span class="t" style="left:255.69px;top:178px;transform:scaleX(1.0333)">oaded</span><span class="t" style="left:290.17px;top:178px;transform:scaleX(0.8766)">A</span><span class="t" style="left:297.19px;top:178px;transform:scaleX(1.0333)">pk</span></div>
<div class="g" style="color:#f2f2f2"><span class="t" style="left:400.07px;top:178px;transform:scaleX(0.9028)">1573</span></div>
<div class="g" style="color:#f2f2f2"><span class="t" style="left:449.87px;top:178px;transform:scaleX(0.9028)">1573</span></div>
<div class="g" style="color:#f2f2f2"><span class="t" style="left:499.97px;top:178px;transform:scaleX(0.8647)">ZTEPOINT</span><span class="t" style="left:551.27px;top:177px;transform:scaleX(0.7334)">_</span><span class="t" style="left:556.17px;top:178px;transform:scaleX(0.8647)">BR</span><span class="t" style="left:570.58px;top:177px;transform:scaleX(0.7334)">_</span><span class="t" style="left:575.48px;top:178px;transform:scaleX(0.8647)">STATS</span><span class="t" style="left:608.92px;top:178px;transform:scaleX(0.8455)">|</span><span class="t" style="left:611.55px;top:178px;transform:scaleX(1.0192)">finish</span><span class="t" style="left:643.69px;top:178px;transform:scaleX(1.0192)">register</span><span class="t" style="left:684.47px;top:178px;transform:scaleX(0.8455)">:</span><span class="t" style="left:687.29px;top:178px;transform:scaleX(1.0192)">com</span><span class="t" style="left:710.40px;top:178px;transform:scaleX(0.8455)">.</span><span class="t" style="left:713.21px;top:178px;transform:scaleX(1.0192)">android</span><span class="t" style="left:754.02px;top:178px;transform:scaleX(0.8455)">.</span><span class="t" style="left:756.83px;top:178px;transform:scaleX(1.0192)">server</span><span class="t" style="left:790.82px;top:178px;transform:scaleX(0.8455)">.</span><span class="t" style="left:793.64px;top:178px;transform:scaleX(1.0192)">wifi</span><span class="t" style="left:811.30px;top:178px;transform:scaleX(0.8455)">.</span><span class="t" style="left:814.12px;top:178px;transform:scaleX(0.8647)">W</span><span class="t" style="left:823.91px;top:178px;transform:scaleX(1.0192)">ifi</span><span class="t" style="left:832.75px;top:178px;transform:scaleX(0.8647)">S</span><span class="t" style="left:839.67px;top:178px;transform:scaleX(1.0192)">ervice</span><span class="t" style="left:872.29px;top:178px;transform:scaleX(0.8647)">I</span><span class="t" style="left:875.18px;top:178px;transform:scaleX(1.0192)">mpl</span><span class="t" style="left:894.88px;top:178px;transform:scaleX(0.8829)">$</span><span class="t" style="left:900.78px;top:178px;transform:scaleX(0.8930)">1</span><span class="t" style="left:906.74px;top:178px;transform:scaleX(0.8829)">@</span><span class="t" style="left:917.49px;top:178px;transform:scaleX(0.8930)">786</span><span class="t" style="left:935.37px;top:178px;transform:scaleX(0.8455)">...</span></div>
<div class="g" style="color:#f2f2f2"><span class="t" style="left:43.85px;top:197px;transform:scaleX(0.9052)">27</span><span class="t" style="left:55.94px;top:197px;transform:scaleX(0.8571)">.</span><span class="t" style="left:58.79px;top:197px;transform:scaleX(0.9052)">05</span><span class="t" style="left:70.88px;top:197px;transform:scaleX(0.8571)">.</span><span class="t" style="left:73.73px;top:197px;transform:scaleX(0.9052)">2025</span><span class="t" style="left:101.53px;top:197px;transform:scaleX(0.9052)">8</span><span class="t" style="left:107.57px;top:197px;transform:scaleX(0.8571)">:</span><span class="t" style="left:110.43px;top:197px;transform:scaleX(0.9052)">34</span><span class="t" style="left:122.51px;top:197px;transform:scaleX(0.8571)">:</span><span class="t" style="left:125.37px;top:197px;transform:scaleX(0.9052)">39</span><span class="t" style="left:137.45px;top:197px;transform:scaleX(0.8571)">.</span><span class="t" style="left:140.31px;top:197px;transform:scaleX(0.9052)">111</span></div>
<div class="g" style="color:#f2f2f2"><span class="t" style="left:206.42px;top:197px;transform:scaleX(0.8560)">D</span></div>
<div class="g" style="color:#ec7446"><span class="t" style="left:250.14px;top:197px;transform:scaleX(0.9110)">C</span><span class="t" style="left:258.04px;top:197px;transform:scaleX(1.0738)">ompatibility</span><span class="t" style="left:322.49px;top:197px;transform:scaleX(0.9110)">I</span><span class="t" style="left:325.53px;top:197px;transform:scaleX(1.0738)">nfo</span></div>
<div class="g" style="color:#f2f2f2"><span class="t" style="left:400.07px;top:197px;transform:scaleX(0.9028)">1573</span></div>
<div class="g" style="color:#f2f2f2"><span class="t" style="left:449.87px;top:197px;transform:scaleX(0.9056)">1612</span></div>
<div class="g" style="color:#f2f2f2"><span class="t" style="left:499.46px;top:197px;transform:scaleX(1.0484)">m</span><span class="t" style="left:509.94px;top:197px;transform:scaleX(0.8894)">C</span><span class="t" style="left:517.65px;top:197px;transform:scaleX(1.0484)">ompatibility</span><span class="t" style="left:580.58px;top:197px;transform:scaleX(0.8894)">F</span><span class="t" style="left:587.10px;top:197px;transform:scaleX(1.0484)">lags</span><span class="t" style="left:613.86px;top:197px;transform:scaleX(0.9081)">-</span><span class="t" style="left:621.17px;top:197px;transform:scaleX(0.9185)">10</span></div>
<div class="g" style="color:#f2f2f2"><span class="t" style="left:43.85px;top:216px;transform:scaleX(0.9052)">27</span><span class="t" style="left:55.94px;top:216px;transform:scaleX(0.8571)">.</span><span class="t" style="left:58.79px;top:216px;transform:scaleX(0.9052)">05</span><span class="t" style="left:70.88px;top:216px;transform:scaleX(0.8571)">.</span><span class="t" style="left:73.73px;top:216px;transform:scaleX(0.9052)">2025</span><span class="t" style="left:101.53px;top:216px;transform:scaleX(0.9052)">8</span><span class="t" style="left:107.57px;top:216px;transform:scaleX(0.8571)">:</span><span class="t" style="left:110.43px;top:216px;transform:scaleX(0.9052)">34</span><span class="t" style="left:122.51px;top:216px;transform:scaleX(0.8571)">:</span><span class="t" style="left:125.37px;top:216px;transform:scaleX(0.9052)">39</span><span class="t" style="left:137.45px;top:216px;transform:scaleX(0.8571)">.</span><span class="t" style="left:140.31px;top:216px;transform:scaleX(0.9052)">111</span></div>
<div class="g" style="color:#f2f2f2"><span class="t" style="left:206.42px;top:216px;transform:scaleX(0.8560)">D</span></div>
<div class="g" style="color:#ec7446"><span class="t" style="left:250.14px;top:216px;transform:scaleX(0.9110)">C</span><span class="t" style="left:258.04px;top:216px;transform:scaleX(1.0738)">ompatibility</span><span class="t" style="left:322.49px;top:216px;transform:scaleX(0.9110)">I</span><span class="t" style="left:325.53px;top:216px;transform:scaleX(1.0738)">nfo</span></div>
<div class="g" style="color:#f2f2f2"><span class="t" style="left:400.07px;top:216px;transform:scaleX(0.9028)">1573</span></div>
<div class="g" style="color:#f2f2f2"><span class="t" style="left:449.87px;top:216px;transform:scaleX(0.9056)">1612</span></div>
<div class="g" style="color:#f2f2f2"><span class="t" style="left:499.78px;top:216px;transform:scaleX(1.0278)">application</span><span class="t" style="left:558.74px;top:216px;transform:scaleX(0.8719)">D</span><span class="t" style="left:566.30px;top:216px;transform:scaleX(1.0278)">ensity</span><span class="t" style="left:602.13px;top:216px;transform:scaleX(0.8902)">-</span><span class="t" style="left:609.29px;top:216px;transform:scaleX(0.9004)">480</span></div>
<div class="g" style="color:#f2f2f2"><span class="t" style="left:43.85px;top:235px;transform:scaleX(0.9053)">27</span><span class="t" style="left:55.94px;top:235px;transform:scaleX(0.8572)">.</span><span class="t" style="left:58.80px;top:235px;transform:scaleX(0.9053)">05</span><span class="t" style="left:70.88px;top:235px;transform:scaleX(0.8572)">.</span><span class="t" style="left:73.74px;top:235px;transform:scaleX(0.9053)">2025</span><span class="t" style="left:101.54px;top:235px;transform:scaleX(0.9053)">8</span><span class="t" style="left:107.58px;top:235px;transform:scaleX(0.8572)">:</span><span class="t" style="left:110.44px;top:235px;transform:scaleX(0.9053)">34</span><span class="t" style="left:122.52px;top:235px;transform:scaleX(0.8572)">:</span><span class="t" style="left:125.38px;top:235px;transform:scaleX(0.9053)">39</span><span class="t" style="left:137.46px;top:235px;transform:scaleX(0.8572)">.</span><span class="t" style="left:140.32px;top:235px;transform:scaleX(0.9053)">112</span></div>
<div class="g" style="color:#f2f2f2"><span class="t" style="left:206.42px;top:235px;transform:scaleX(0.8560)">D</span></div>
<div class="g" style="color:#ec7446"><span class="t" style="left:250.14px;top:235px;transform:scaleX(0.9110)">C</span><span class="t" style="left:258.04px;top:235px;transform:scaleX(1.0738)">ompatibility</span><span class="t" style="left:322.49px;top:235px;transform:scaleX(0.9110)">I</span><span class="t" style="left:325.53px;top:235px;transform:scaleX(1.0738)">nfo</span></div>
<div class="g" style="color:#f2f2f2"><span class="t" style="left:400.07px;top:235px;transform:scaleX(0.9028)">1573</span></div>
<div class="g" style="color:#f2f2f2"><span class="t" style="left:449.87px;top:235px;transform:scaleX(0.9056)">1612</span></div>
<div class="g" style="color:#f2f2f2"><span class="t" style="left:499.78px;top:235px;transform:scaleX(1.0108)">application</span><span class="t" style="left:557.78px;top:235px;transform:scaleX(0.8576)">S</span><span class="t" style="left:564.65px;top:235px;transform:scaleX(1.0108)">cale</span><span class="t" style="left:590.45px;top:235px;transform:scaleX(0.8756)">-</span><span class="t" style="left:597.50px;top:235px;transform:scaleX(0.8856)">1</span><span class="t" style="left:603.41px;top:235px;transform:scaleX(0.8385)">.</span><span class="t" style="left:606.20px;top:235px;transform:scaleX(0.8856)">0</span></div>
<div class="g" style="color:#f2f2f2"><span class="t" style="left:43.85px;top:254px;transform:scaleX(0.9048)">27</span><span class="t" style="left:55.93px;top:254px;transform:scaleX(0.8567)">.</span><span class="t" style="left:58.79px;top:254px;transform:scaleX(0.9048)">05</span><span class="t" style="left:70.86px;top:254px;transform:scaleX(0.8567)">.</span><span class="t" style="left:73.72px;top:254px;transform:scaleX(0.9048)">2025</span><span class="t" style="left:101.50px;top:254px;transform:scaleX(0.9048)">8</span><span class="t" style="left:107.54px;top:254px;transform:scaleX(0.8567)">:</span><span class="t" style="left:110.40px;top:254px;transform:scaleX(0.9048)">34</span><span class="t" style="left:122.47px;top:254px;transform:scaleX(0.8567)">:</span><span class="t" style="left:125.33px;top:254px;transform:scaleX(0.9048)">39</span><span class="t" style="left:137.41px;top:254px;transform:scaleX(0.8567)">.</span><span class="t" style="left:140.26px;top:254px;transform:scaleX(0.9048)">113</span></div>
<div class="g" style="color:#f2f2f2"><span class="t" style="left:206.42px;top:254px;transform:scaleX(0.8560)">D</span></div>
<div class="g" style="color:#e2508a"><span class="t" style="left:249.84px;top:254px;transform:scaleX(0.8766)">L</span><span class="t" style="left:255.69px;top:254px;transform:scaleX(1.0333)">oaded</span><span class="t" style="left:290.17px;top:254px;transform:scaleX(0.8766)">A</span><span class="t" style="left:297.19px;top:254px;transform:scaleX(1.0333)">pk</span></div>
<div class="g" style="color:#f2f2f2"><span class="t" style="left:400.07px;top:254px;transform:scaleX(0.9056)">1882</span></div>
<div class="g" style="color:#f2f2f2"><span class="t" style="left:449.87px;top:254px;transform:scaleX(0.9056)">1882</span></div>
<div class="g" style="color:#f2f2f2"><span class="t" style="left:499.97px;top:254px;transform:scaleX(0.8579)">ZTEPOINT</span><span class="t" style="left:550.87px;top:253px;transform:scaleX(0.7276)">_</span><span class="t" style="left:555.73px;top:254px;transform:scaleX(0.8579)">BR</span><span class="t" style="left:570.03px;top:253px;transform:scaleX(0.7276)">_</span><span class="t" style="left:574.89px;top:254px;transform:scaleX(0.8579)">STATS</span><span class="t" style="left:608.06px;top:254px;transform:scaleX(0.8388)">|</span><span class="t" style="left:610.68px;top:254px;transform:scaleX(1.0112)">finish</span><span class="t" style="left:642.56px;top:254px;transform:scaleX(1.0112)">register</span><span class="t" style="left:683.02px;top:254px;transform:scaleX(0.8388)">:</span><span class="t" style="left:685.81px;top:254px;transform:scaleX(1.0112)">com</span><span class="t" style="left:708.74px;top:254px;transform:scaleX(0.8388)">.</span><span class="t" style="left:711.54px;top:254px;transform:scaleX(1.0112)">android</span><span class="t" style="left:752.02px;top:254px;transform:scaleX(0.8388)">.</span><span class="t" style="left:754.81px;top:254px;transform:scaleX(1.0112)">systemui</span><span class="t" style="left:802.69px;top:254px;transform:scaleX(0.8388)">.</span><span class="t" style="left:805.48px;top:254px;transform:scaleX(1.0112)">statusbar</span><span class="t" style="left:855.40px;top:254px;transform:scaleX(0.8388)">.</span><span class="t" style="left:858.19px;top:254px;transform:scaleX(1.0112)">policy</span><span class="t" style="left:889.22px;top:254px;transform:scaleX(0.8388)">.</span><span class="t" style="left:892.01px;top:254px;transform:scaleX(0.8579)">B</span><span class="t" style="left:898.88px;top:254px;transform:scaleX(1.0112)">attery</span><span class="t" style="left:929.23px;top:254px;transform:scaleX(0.8388)">...</span></div>
<div class="g" style="color:#f2f2f2"><span class="t" style="left:43.85px;top:273px;transform:scaleX(0.9048)">27</span><span class="t" style="left:55.93px;top:273px;transform:scaleX(0.8567)">.</span><span class="t" style="left:58.79px;top:273px;transform:scaleX(0.9048)">05</span><span class="t" style="left:70.86px;top:273px;transform:scaleX(0.8567)">.</span><span class="t" style="left:73.72px;top:273px;transform:scaleX(0.9048)">2025</span><span class="t" style="left:101.50px;top:273px;transform:scaleX(0.9048)">8</span><span class="t" style="left:107.54px;top:273px;transform:scaleX(0.8567)">:</span><span class="t" style="left:110.40px;top:273px;transform:scaleX(0.9048)">34</span><span class="t" style="left:122.47px;top:273px;transform:scaleX(0.8567)">:</span><span class="t" style="left:125.33px;top:273px;transform:scaleX(0.9048)">39</span><span class="t" style="left:137.41px;top:273px;transform:scaleX(0.8567)">.</span><span class="t" style="left:140.26px;top:273px;transform:scaleX(0.9048)">113</span></div>
<div class="g" style="color:#f2f2f2"><span class="t" style="left:208.37px;top:273px;transform:scaleX(0.8560)">I</span></div>
<div class="g" style="color:#3ec2dc"><span class="t" style="left:250.68px;top:273px;transform:scaleX(0.8487)">A</span><span class="t" style="left:257.47px;top:273px">bnormal</span><span class="t" style="left:300.84px;top:273px;transform:scaleX(0.8487)">R</span><span class="t" style="left:308.20px;top:273px">eceiver</span></div>
<div class="g" style="color:#f2f2f2"><span class="t" style="left:400.36px;top:273px;transform:scaleX(0.8917)">29400</span></div>
<div class="g" style="color:#f2f2f2"><span class="t" style="left:450.16px;top:273px;transform:scaleX(0.8917)">29400</span></div>
<div class="g" style="color:#f2f2f2"><span class="t" style="left:499.78px;top:273px;transform:scaleX(1.0259)">action</span><span class="t" style="left:532.63px;top:273px;transform:scaleX(0.8887)">=</span><span class="t" style="left:538.86px;top:273px;transform:scaleX(1.0259)">zte</span><span class="t" style="left:555.28px;top:273px;transform:scaleX(0.8511)">.</span><span class="t" style="left:558.12px;top:273px;transform:scaleX(1.0259)">intent</span><span class="t" style="left:588.23px;top:273px;transform:scaleX(0.8511)">.</span><span class="t" style="left:591.07px;top:273px;transform:scaleX(1.0259)">action</span><span class="t" style="left:623.92px;top:273px;transform:scaleX(0.8511)">.</span><span class="t" style="left:626.76px;top:273px;transform:scaleX(0.8704)">BATTERY</span><span class="t" style="left:674.93px;top:272px;transform:scaleX(0.7382)">_</span><span class="t" style="left:679.86px;top:273px;transform:scaleX(0.8704)">FULL</span><span class="t" style="left:705.40px;top:272px;transform:scaleX(0.7382)">_</span><span class="t" style="left:710.32px;top:273px;transform:scaleX(0.8704)">ZTE</span></div>
<div class="g" style="color:#f2f2f2"><span class="t" style="left:43.85px;top:292px;transform:scaleX(0.9048)">27</span><span class="t" style="left:55.93px;top:292px;transform:scaleX(0.8567)">.</span><span class="t" style="left:58.79px;top:292px;transform:scaleX(0.9048)">05</span><span class="t" style="left:70.86px;top:292px;transform:scaleX(0.8567)">.</span><span class="t" style="left:73.72px;top:292px;transform:scaleX(0.9048)">2025</span><span class="t" style="left:101.50px;top:292px;transform:scaleX(0.9048)">8</span><span class="t" style="left:107.54px;top:292px;transform:scaleX(0.8567)">:</span><span class="t" style="left:110.40px;top:292px;transform:scaleX(0.9048)">34</span><span class="t" style="left:122.47px;top:292px;transform:scaleX(0.8567)">:</span><span class="t" style="left:125.33px;top:292px;transform:scaleX(0.9048)">39</span><span class="t" style="left:137.41px;top:292px;transform:scaleX(0.8567)">.</span><span class="t" style="left:140.26px;top:292px;transform:scaleX(0.9048)">113</span></div>
<div class="g" style="color:#f2f2f2"><span class="t" style="left:208.37px;top:292px;transform:scaleX(0.8560)">I</span></div>
<div class="g" style="color:#3ec2dc"><span class="t" style="left:250.68px;top:292px;transform:scaleX(0.8487)">A</span><span class="t" style="left:257.47px;top:292px">bnormal</span><span class="t" style="left:300.84px;top:292px;transform:scaleX(0.8487)">R</span><span class="t" style="left:308.20px;top:292px">eceiver</span></div>
<div class="g" style="color:#f2f2f2"><span class="t" style="left:400.36px;top:292px;transform:scaleX(0.8917)">29400</span></div>
<div class="g" style="color:#f2f2f2"><span class="t" style="left:450.16px;top:292px;transform:scaleX(0.8917)">29400</span></div>
<div class="g" style="color:#f2f2f2"><span class="t" style="left:500.28px;top:292px;transform:scaleX(0.8705)">ACTION</span><span class="t" style="left:539.74px;top:291px;transform:scaleX(0.7383)">_</span><span class="t" style="left:544.67px;top:292px;transform:scaleX(0.8705)">BATTERY</span><span class="t" style="left:592.84px;top:291px;transform:scaleX(0.7383)">_</span><span class="t" style="left:597.77px;top:292px;transform:scaleX(0.8705)">FULL</span><span class="t" style="left:626.92px;top:292px;transform:scaleX(0.8705)">E</span><span class="t" style="left:633.89px;top:292px;transform:scaleX(1.0261)">nter</span></div>
<div class="g" style="color:#f2f2f2"><span class="t" style="left:43.85px;top:311px;transform:scaleX(0.9046)">27</span><span class="t" style="left:55.93px;top:311px;transform:scaleX(0.8565)">.</span><span class="t" style="left:58.78px;top:311px;transform:scaleX(0.9046)">05</span><span class="t" style="left:70.86px;top:311px;transform:scaleX(0.8565)">.</span><span class="t" style="left:73.71px;top:311px;transform:scaleX(0.9046)">2025</span><span class="t" style="left:101.49px;top:311px;transform:scaleX(0.9046)">8</span><span class="t" style="left:107.53px;top:311px;transform:scaleX(0.8565)">:</span><span class="t" style="left:110.38px;top:311px;transform:scaleX(0.9046)">34</span><span class="t" style="left:122.46px;top:311px;transform:scaleX(0.8565)">:</span><span class="t" style="left:125.31px;top:311px;transform:scaleX(0.9046)">39</span><span class="t" style="left:137.39px;top:311px;transform:scaleX(0.8565)">.</span><span class="t" style="left:140.24px;top:311px;transform:scaleX(0.9046)">115</span></div>
<div class="g" style="color:#f2f2f2"><span class="t" style="left:206.42px;top:311px;transform:scaleX(0.8560)">D</span></div>
<div class="g" style="color:#3ec2dc"><span class="t" style="left:250.68px;top:311px;transform:scaleX(0.8657)">A</span><span class="t" style="left:257.61px;top:311px;transform:scaleX(1.0205)">ctivity</span><span class="t" style="left:288.22px;top:311px;transform:scaleX(0.8657)">T</span><span class="t" style="left:294.57px;top:311px;transform:scaleX(1.0205)">hread</span></div>
<div class="g" style="color:#f2f2f2"><span class="t" style="left:400.36px;top:311px;transform:scaleX(0.8917)">29400</span></div>
<div class="g" style="color:#f2f2f2"><span class="t" style="left:450.16px;top:311px;transform:scaleX(0.8917)">29400</span></div>
<div class="g" style="color:#f2f2f2"><span class="t" style="left:499.97px;top:311px;transform:scaleX(0.8624)">ZTEPOINT</span><span class="t" style="left:551.14px;top:310px;transform:scaleX(0.7314)">_</span><span class="t" style="left:556.02px;top:311px;transform:scaleX(0.8624)">BR</span><span class="t" style="left:570.39px;top:310px;transform:scaleX(0.7314)">_</span><span class="t" style="left:575.28px;top:311px;transform:scaleX(0.8624)">STATS</span><span class="t" style="left:608.63px;top:311px;transform:scaleX(0.8432)">|</span><span class="t" style="left:611.25px;top:311px;transform:scaleX(1.0165)">finish</span><span class="t" style="left:643.30px;top:311px;transform:scaleX(1.0165)">component</span><span class="t" style="left:703.65px;top:311px;transform:scaleX(0.8432)">:</span><span class="t" style="left:706.46px;top:311px;transform:scaleX(1.0165)">com</span><span class="t" style="left:729.51px;top:311px;transform:scaleX(0.8432)">.</span><span class="t" style="left:732.32px;top:311px;transform:scaleX(1.0165)">zte</span><span class="t" style="left:748.59px;top:311px;transform:scaleX(0.8432)">.</span><span class="t" style="left:751.40px;top:311px;transform:scaleX(1.0165)">powersavemode</span><span class="t" style="left:840.91px;top:311px;transform:scaleX(0.8432)">.</span><span class="t" style="left:843.72px;top:311px;transform:scaleX(1.0165)">receiver</span><span class="t" style="left:887.10px;top:311px;transform:scaleX(0.8432)">.</span><span class="t" style="left:889.91px;top:311px;transform:scaleX(0.8624)">A</span><span class="t" style="left:896.81px;top:311px;transform:scaleX(1.0165)">bnorm</span><span class="t" style="left:931.39px;top:311px;transform:scaleX(0.8432)">...</span></div>
<div class="g" style="color:#f2f2f2"><span class="t" style="left:43.85px;top:330px;transform:scaleX(0.9046)">27</span><span class="t" style="left:55.93px;top:330px;transform:scaleX(0.8565)">.</span><span class="t" style="left:58.78px;top:330px;transform:scaleX(0.9046)">05</span><span class="t" style="left:70.86px;top:330px;transform:scaleX(0.8565)">.</span><span class="t" style="left:73.71px;top:330px;transform:scaleX(0.9046)">2025</span><span class="t" style="left:101.49px;top:330px;transform:scaleX(0.9046)">8</span><span class="t" style="left:107.53px;top:330px;transform:scaleX(0.8565)">:</span><span class="t" style="left:110.38px;top:330px;transform:scaleX(0.9046)">34</span><span class="t" style="left:122.46px;top:330px;transform:scaleX(0.8565)">:</span><span class="t" style="left:125.31px;top:330px;transform:scaleX(0.9046)">39</span><span class="t" style="left:137.39px;top:330px;transform:scaleX(0.8565)">.</span><span class="t" style="left:140.24px;top:330px;transform:scaleX(0.9046)">115</span></div>
<div class="g" style="color:#f2f2f2"><span class="t" style="left:208.37px;top:330px;transform:scaleX(0.8560)">I</span></div>
<div class="g" style="color:#3ec2dc"><span class="t" style="left:250.68px;top:330px;transform:scaleX(0.8487)">A</span><span class="t" style="left:257.47px;top:330px">bnormal</span><span class="t" style="left:300.84px;top:330px;transform:scaleX(0.8487)">R</span><span class="t" style="left:308.20px;top:330px">eceiver</span></div>
<div class="g" style="color:#f2f2f2"><span class="t" style="left:400.36px;top:330px;transform:scaleX(0.8917)">29400</span></div>
<div class="g" style="color:#f2f2f2"><span class="t" style="left:450.16px;top:330px;transform:scaleX(0.8917)">29490</span></div>
<div class="g" style="color:#f2f2f2"><span class="t" style="left:500.28px;top:330px;transform:scaleX(0.8856)">ACTION</span><span class="t" style="left:540.43px;top:329px;transform:scaleX(0.7511)">_</span><span class="t" style="left:545.44px;top:330px;transform:scaleX(0.8856)">BATTERY</span><span class="t" style="left:594.45px;top:329px;transform:scaleX(0.7511)">_</span><span class="t" style="left:599.46px;top:330px;transform:scaleX(0.8856)">FULL</span><span class="t" style="left:629.11px;top:330px;transform:scaleX(0.8659)">.....</span></div>
<div class="g" style="color:#f2f2f2"><span class="t" style="left:43.85px;top:349px;transform:scaleX(0.9048)">27</span><span class="t" style="left:55.93px;top:349px;transform:scaleX(0.8567)">.</span><span class="t" style="left:58.79px;top:349px;transform:scaleX(0.9048)">05</span><span class="t" style="left:70.86px;top:349px;transform:scaleX(0.8567)">.</span><span class="t" style="left:73.72px;top:349px;transform:scaleX(0.9048)">2025</span><span class="t" style="left:101.50px;top:349px;transform:scaleX(0.9048)">8</span><span class="t" style="left:107.54px;top:349px;transform:scaleX(0.8567)">:</span><span class="t" style="left:110.40px;top:349px;transform:scaleX(0.9048)">34</span><span class="t" style="left:122.47px;top:349px;transform:scaleX(0.8567)">:</span><span class="t" style="left:125.33px;top:349px;transform:scaleX(0.9048)">39</span><span class="t" style="left:137.41px;top:349px;transform:scaleX(0.8567)">.</span><span class="t" style="left:140.26px;top:349px;transform:scaleX(0.9048)">116</span></div>
<div class="g" style="color:#f2f2f2"><span class="t" style="left:208.37px;top:349px;transform:scaleX(0.8560)">I</span></div>
<div class="g" style="color:#3ec2dc"><span class="t" style="left:249.79px;top:349px;transform:scaleX(0.9207)">P</span><span class="t" style="left:257.16px;top:349px;transform:scaleX(1.0853)">ower</span><span class="t" style="left:285.39px;top:349px;transform:scaleX(0.9207)">M</span><span class="t" style="left:294.59px;top:349px;transform:scaleX(1.0853)">onitor</span><span class="t" style="left:327.17px;top:349px;transform:scaleX(0.9207)">DBN</span><span class="t" style="left:350.50px;top:349px;transform:scaleX(1.0853)">otify</span><span class="t" style="left:374.38px;top:349px;transform:scaleX(0.9003)">...</span></div>
<div class="g" style="color:#f2f2f2"><span class="t" style="left:400.36px;top:349px;transform:scaleX(0.8917)">29400</span></div>
<div class="g" style="color:#f2f2f2"><span class="t" style="left:450.16px;top:349px;transform:scaleX(0.8917)">29490</span></div>
<div class="g" style="color:#f2f2f2"><span class="t" style="left:499.48px;top:349px;transform:scaleX(1.0229)">reset</span><span class="t" style="left:526.77px;top:349px;transform:scaleX(0.8678)">H</span><span class="t" style="left:534.29px;top:349px;transform:scaleX(1.0229)">as</span><span class="t" style="left:547.26px;top:349px;transform:scaleX(0.8678)">N</span><span class="t" style="left:554.78px;top:349px;transform:scaleX(1.0229)">otify</span><span class="t" style="left:577.29px;top:349px;transform:scaleX(0.8678)">S</span><span class="t" style="left:584.23px;top:349px;transform:scaleX(1.0229)">howed</span><span class="t" style="left:624.00px;top:349px;transform:scaleX(1.0229)">sql</span><span class="t" style="left:639.69px;top:349px;transform:scaleX(0.8860)">=</span><span class="t" style="left:645.90px;top:349px;transform:scaleX(1.0229)">update</span><span class="t" style="left:687.03px;top:349px;transform:scaleX(1.0229)">power</span><span class="t" style="left:720.47px;top:348px;transform:scaleX(0.7360)">_</span><span class="t" style="left:725.38px;top:349px;transform:scaleX(1.0229)">notify</span><span class="t" style="left:758.31px;top:349px;transform:scaleX(1.0229)">set</span><span class="t" style="left:778.28px;top:349px;transform:scaleX(1.0229)">notify</span><span class="t" style="left:807.61px;top:349px;transform:scaleX(0.8678)">S</span><span class="t" style="left:814.56px;top:349px;transform:scaleX(1.0229)">howed</span><span class="t" style="left:850.73px;top:349px;transform:scaleX(0.8860)">=</span><span class="t" style="left:856.94px;top:349px;transform:scaleX(0.8962)">0</span></div>
<div class="g" style="color:#f2f2f2"><span class="t" style="left:43.85px;top:368px;transform:scaleX(0.9048)">27</span><span class="t" style="left:55.93px;top:368px;transform:scaleX(0.8567)">.</span><span class="t" style="left:58.79px;top:368px;transform:scaleX(0.9048)">05</span><span class="t" style="left:70.86px;top:368px;transform:scaleX(0.8567)">.</span><span class="t" style="left:73.72px;top:368px;transform:scaleX(0.9048)">2025</span><span class="t" style="left:101.50px;top:368px;transform:scaleX(0.9048)">8</span><span class="t" style="left:107.54px;top:368px;transform:scaleX(0.8567)">:</span><span class="t" style="left:110.40px;top:368px;transform:scaleX(0.9048)">34</span><span class="t" style="left:122.47px;top:368px;transform:scaleX(0.8567)">:</span><span class="t" style="left:125.33px;top:368px;transform:scaleX(0.9048)">39</span><span class="t" style="left:137.41px;top:368px;transform:scaleX(0.8567)">.</span><span class="t" style="left:140.26px;top:368px;transform:scaleX(0.9048)">116</span></div>
<div class="g" style="color:#f2f2f2"><span class="t" style="left:206.42px;top:368px;transform:scaleX(0.8560)">D</span></div>
<div class="g" style="color:#ec7446"><span class="t" style="left:249.86px;top:368px;transform:scaleX(0.8527)">B</span><span class="t" style="left:256.69px;top:368px;transform:scaleX(1.0051)">roadcast</span><span class="t" style="left:302.95px;top:368px;transform:scaleX(0.8527)">Q</span><span class="t" style="left:310.90px;top:368px;transform:scaleX(1.0051)">ueue</span></div>
<div class="g" style="color:#f2f2f2"><span class="t" style="left:400.07px;top:368px;transform:scaleX(0.9028)">1573</span></div>
<div class="g" style="color:#f2f2f2"><span class="t" style="left:450.24px;top:368px;transform:scaleX(0.8830)">8284</span></div>
<div class="g" style="color:#f2f2f2"><span class="t" style="left:499.97px;top:368px;transform:scaleX(0.8610)">ZTEPOINT</span><span class="t" style="left:551.06px;top:367px;transform:scaleX(0.7303)">_</span><span class="t" style="left:555.93px;top:368px;transform:scaleX(0.8610)">BR</span><span class="t" style="left:570.29px;top:367px;transform:scaleX(0.7303)">_</span><span class="t" style="left:575.16px;top:368px;transform:scaleX(0.8610)">STATS</span><span class="t" style="left:608.46px;top:368px;transform:scaleX(0.8419)">|</span><span class="t" style="left:611.08px;top:368px;transform:scaleX(1.0149)">b</span><span class="t" style="left:617.85px;top:368px;transform:scaleX(0.8892)">414</span><span class="t" style="left:635.66px;top:368px;transform:scaleX(1.0149)">def</span><span class="t" style="left:652.59px;top:368px;transform:scaleX(0.8419)">|</span><span class="t" style="left:655.21px;top:368px;transform:scaleX(1.0149)">ob</span><span class="t" style="left:668.76px;top:368px;transform:scaleX(0.8419)">|</span><span class="t" style="left:671.38px;top:368px;transform:scaleX(0.8610)">B</span><span class="t" style="left:678.27px;top:368px;transform:scaleX(1.0149)">roadcast</span><span class="t" style="left:728.55px;top:368px;transform:scaleX(1.0149)">dispatched</span><span class="t" style="left:791.03px;top:368px;transform:scaleX(1.0149)">from</span><span class="t" style="left:818.95px;top:368px;transform:scaleX(1.0149)">android</span><span class="t" style="left:863.14px;top:368px;transform:scaleX(0.8791)">(</span><span class="t" style="left:866.66px;top:368px;transform:scaleX(0.8892)">1573</span><span class="t" style="left:890.39px;top:368px;transform:scaleX(0.8419)">:</span><span class="t" style="left:893.20px;top:368px;transform:scaleX(1.0149)">system</span><span class="t" style="left:931.77px;top:368px;transform:scaleX(0.8791)">/</span><span class="t" style="left:934.70px;top:368px;transform:scaleX(0.8419)">...</span></div>
<div class="g" style="color:#f2f2f2"><span class="t" style="left:43.85px;top:387px;transform:scaleX(0.9048)">27</span><span class="t" style="left:55.93px;top:387px;transform:scaleX(0.8566)">.</span><span class="t" style="left:58.79px;top:387px;transform:scaleX(0.9048)">05</span><span class="t" style="left:70.86px;top:387px;transform:scaleX(0.8566)">.</span><span class="t" style="left:73.72px;top:387px;transform:scaleX(0.9048)">2025</span><span class="t" style="left:101.50px;top:387px;transform:scaleX(0.9048)">8</span><span class="t" style="left:107.54px;top:387px;transform:scaleX(0.8566)">:</span><span class="t" style="left:110.39px;top:387px;transform:scaleX(0.9048)">34</span><span class="t" style="left:122.47px;top:387px;transform:scaleX(0.8566)">:</span><span class="t" style="left:125.33px;top:387px;transform:scaleX(0.9048)">39</span><span class="t" style="left:137.40px;top:387px;transform:scaleX(0.8566)">.</span><span class="t" style="left:140.26px;top:387px;transform:scaleX(0.9048)">118</span></div>
<div class="g" style="color:#f2f2f2"><span class="t" style="left:206.42px;top:387px;transform:scaleX(0.8560)">D</span></div>
<div class="g" style="color:#e2508a"><span class="t" style="left:249.84px;top:387px;transform:scaleX(0.8766)">L</span><span class="t" style="left:255.69px;top:387px;transform:scaleX(1.0333)">oaded</span><span class="t" style="left:290.17px;top:387px;transform:scaleX(0.8766)">A</span><span class="t" style="left:297.19px;top:387px;transform:scaleX(1.0333)">pk</span></div>
<div class="g" style="color:#f2f2f2"><span class="t" style="left:400.07px;top:387px;transform:scaleX(0.9056)">1882</span></div>
<div class="g" style="color:#f2f2f2"><span class="t" style="left:449.87px;top:387px;transform:scaleX(0.9056)">1882</span></div>
<div class="g" style="color:#f2f2f2"><span class="t" style="left:499.97px;top:387px;transform:scaleX(0.8568)">ZTEPOINT</span><span class="t" style="left:550.81px;top:386px;transform:scaleX(0.7267)">_</span><span class="t" style="left:555.66px;top:387px;transform:scaleX(0.8568)">BR</span><span class="t" style="left:569.94px;top:386px;transform:scaleX(0.7267)">_</span><span class="t" style="left:574.79px;top:387px;transform:scaleX(0.8568)">STATS</span><span class="t" style="left:607.93px;top:387px;transform:scaleX(0.8378)">|</span><span class="t" style="left:610.54px;top:387px;transform:scaleX(1.0099)">finish</span><span class="t" style="left:642.38px;top:387px;transform:scaleX(1.0099)">register</span><span class="t" style="left:682.79px;top:387px;transform:scaleX(0.8378)">:</span><span class="t" style="left:685.58px;top:387px;transform:scaleX(1.0099)">com</span><span class="t" style="left:708.48px;top:387px;transform:scaleX(0.8378)">.</span><span class="t" style="left:711.27px;top:387px;transform:scaleX(1.0099)">android</span><span class="t" style="left:751.70px;top:387px;transform:scaleX(0.8378)">.</span><span class="t" style="left:754.49px;top:387px;transform:scaleX(1.0099)">systemui</span><span class="t" style="left:802.31px;top:387px;transform:scaleX(0.8378)">.</span><span class="t" style="left:805.10px;top:387px;transform:scaleX(1.0099)">power</span><span class="t" style="left:838.11px;top:387px;transform:scaleX(0.8378)">.</span><span class="t" style="left:840.90px;top:387px;transform:scaleX(0.8568)">P</span><span class="t" style="left:847.76px;top:387px;transform:scaleX(1.0099)">ower</span><span class="t" style="left:874.03px;top:387px;transform:scaleX(0.8568)">UI</span><span class="t" style="left:884.31px;top:387px;transform:scaleX(0.8748)">$</span><span class="t" style="left:890.15px;top:387px;transform:scaleX(0.8568)">R</span><span class="t" style="left:897.57px;top:387px;transform:scaleX(1.0099)">eceiver</span><span class="t" style="left:936.64px;top:387px;transform:scaleX(0.8378)">...</span></div>
<div class="g" style="color:#f2f2f2"><span class="t" style="left:43.85px;top:406px;transform:scaleX(0.9048)">27</span><span class="t" style="left:55.93px;top:406px;transform:scaleX(0.8566)">.</span><span class="t" style="left:58.79px;top:406px;transform:scaleX(0.9048)">05</span><span class="t" style="left:70.86px;top:406px;transform:scaleX(0.8566)">.</span><span class="t" style="left:73.72px;top:406px;transform:scaleX(0.9048)">2025</span><span class="t" style="left:101.50px;top:406px;transform:scaleX(0.9048)">8</span><span class="t" style="left:107.54px;top:406px;transform:scaleX(0.8566)">:</span><span class="t" style="left:110.39px;top:406px;transform:scaleX(0.9048)">34</span><span class="t" style="left:122.47px;top:406px;transform:scaleX(0.8566)">:</span><span class="t" style="left:125.33px;top:406px;transform:scaleX(0.9048)">39</span><span class="t" style="left:137.40px;top:406px;transform:scaleX(0.8566)">.</span><span class="t" style="left:140.26px;top:406px;transform:scaleX(0.9048)">118</span></div>
<div class="g" style="color:#f2f2f2"><span class="t" style="left:206.42px;top:406px;transform:scaleX(0.8560)">D</span></div>
<div class="g" style="color:#e2508a"><span class="t" style="left:249.83px;top:406px;transform:scaleX(0.8864)">K</span><span class="t" style="left:256.92px;top:406px;transform:scaleX(1.0448)">eyguard</span><span class="t" style="left:302.23px;top:406px;transform:scaleX(0.8864)">U</span><span class="t" style="left:309.91px;top:406px;transform:scaleX(1.0448)">pdate</span><span class="t" style="left:341.29px;top:406px;transform:scaleX(0.8864)">M</span><span class="t" style="left:350.15px;top:406px;transform:scaleX(1.0448)">onitor</span></div>
<div class="g" style="color:#f2f2f2"><span class="t" style="left:400.07px;top:406px;transform:scaleX(0.9056)">1882</span></div>
<div class="g" style="color:#f2f2f2"><span class="t" style="left:449.87px;top:406px;transform:scaleX(0.9056)">1882</span></div>
<div class="g" style="color:#f2f2f2"><span class="t" style="left:499.46px;top:406px;transform:scaleX(1.0142)">handle</span><span class="t" style="left:536.00px;top:406px;transform:scaleX(0.8604)">B</span><span class="t" style="left:542.89px;top:406px;transform:scaleX(1.0142)">attery</span><span class="t" style="left:573.33px;top:406px;transform:scaleX(0.8604)">U</span><span class="t" style="left:580.78px;top:406px;transform:scaleX(1.0142)">pdate</span></div>
<div class="g" style="color:#f2f2f2"><span class="t" style="left:43.85px;top:425px;transform:scaleX(0.9048)">27</span><span class="t" style="left:55.93px;top:425px;transform:scaleX(0.8566)">.</span><span class="t" style="left:58.79px;top:425px;transform:scaleX(0.9048)">05</span><span class="t" style="left:70.86px;top:425px;transform:scaleX(0.8566)">.</span><span class="t" style="left:73.72px;top:425px;transform:scaleX(0.9048)">2025</span><span class="t" style="left:101.50px;top:425px;transform:scaleX(0.9048)">8</span><span class="t" style="left:107.54px;top:425px;transform:scaleX(0.8566)">:</span><span class="t" style="left:110.39px;top:425px;transform:scaleX(0.9048)">34</span><span class="t" style="left:122.47px;top:425px;transform:scaleX(0.8566)">:</span><span class="t" style="left:125.33px;top:425px;transform:scaleX(0.9048)">39</span><span class="t" style="left:137.40px;top:425px;transform:scaleX(0.8566)">.</span><span class="t" style="left:140.26px;top:425px;transform:scaleX(0.9048)">138</span></div>
<div class="g" style="color:#f2f2f2"><span class="t" style="left:206.42px;top:425px;transform:scaleX(0.8560)">D</span></div>
<div class="g" style="color:#c9c9c9"><span class="t" style="left:250.17px;top:425px;transform:scaleX(0.8627)">C</span><span class="t" style="left:257.65px;top:425px;transform:scaleX(1.0169)">ontacts</span><span class="t" style="left:297.00px;top:425px;transform:scaleX(0.8627)">P</span><span class="t" style="left:303.90px;top:425px;transform:scaleX(1.0169)">rovider</span></div>
<div class="g" style="color:#f2f2f2"><span class="t" style="left:400.36px;top:425px;transform:scaleX(0.8932)">27928</span></div>
<div class="g" style="color:#f2f2f2"><span class="t" style="left:450.16px;top:425px;transform:scaleX(0.8933)">29146</span></div>
<div class="g" style="color:#f2f2f2"><span class="t" style="left:499.79px;top:425px;transform:scaleX(0.9980)">contacts</span><span class="t" style="left:547.90px;top:425px;transform:scaleX(0.9980)">provider</span><span class="t" style="left:594.67px;top:425px;transform:scaleX(0.9980)">query</span></div>
<div class="g" style="color:#f2f2f2"><span class="t" style="left:43.85px;top:444px;transform:scaleX(0.9046)">27</span><span class="t" style="left:55.93px;top:444px;transform:scaleX(0.8565)">.</span><span class="t" style="left:58.78px;top:444px;transform:scaleX(0.9046)">05</span><span class="t" style="left:70.86px;top:444px;transform:scaleX(0.8565)">.</span><span class="t" style="left:73.71px;top:444px;transform:scaleX(0.9046)">2025</span><span class="t" style="left:101.49px;top:444px;transform:scaleX(0.9046)">8</span><span class="t" style="left:107.53px;top:444px;transform:scaleX(0.8565)">:</span><span class="t" style="left:110.38px;top:444px;transform:scaleX(0.9046)">34</span><span class="t" style="left:122.46px;top:444px;transform:scaleX(0.8565)">:</span><span class="t" style="left:125.31px;top:444px;transform:scaleX(0.9046)">39</span><span class="t" style="left:137.39px;top:444px;transform:scaleX(0.8565)">.</span><span class="t" style="left:140.24px;top:444px;transform:scaleX(0.9046)">475</span></div>
<div class="g" style="color:#f2f2f2"><span class="t" style="left:208.37px;top:444px;transform:scaleX(0.8560)">I</span></div>
<div class="g" style="color:#7b52c8"><span class="t" style="left:250.22px;top:444px;transform:scaleX(0.9923)">zygote</span><span class="t" style="left:285.30px;top:444px;transform:scaleX(0.8694)">64</span></div>
<div class="g" style="color:#f2f2f2"><span class="t" style="left:400.36px;top:444px;transform:scaleX(0.8945)">29339</span></div>
<div class="g" style="color:#f2f2f2"><span class="t" style="left:450.16px;top:444px;transform:scaleX(0.8933)">29356</span></div>
<div class="g" style="color:#f2f2f2"><span class="t" style="left:500.25px;top:444px;transform:scaleX(0.8577)">W</span><span class="t" style="left:509.97px;top:444px;transform:scaleX(1.0110)">aiting</span><span class="t" style="left:542.52px;top:444px;transform:scaleX(1.0110)">for</span><span class="t" style="left:560.23px;top:444px;transform:scaleX(1.0110)">a</span><span class="t" style="left:570.53px;top:444px;transform:scaleX(1.0110)">blocking</span><span class="t" style="left:618.59px;top:444px;transform:scaleX(0.8577)">GC</span><span class="t" style="left:637.58px;top:444px;transform:scaleX(0.8577)">P</span><span class="t" style="left:644.44px;top:444px;transform:scaleX(1.0110)">rofile</span><span class="t" style="left:670.74px;top:444px;transform:scaleX(0.8577)">S</span><span class="t" style="left:677.60px;top:444px;transform:scaleX(1.0110)">aver</span></div>
<div class="g" style="color:#f2f2f2"><span class="t" style="left:43.85px;top:463px;transform:scaleX(0.9053)">27</span><span class="t" style="left:55.94px;top:463px;transform:scaleX(0.8572)">.</span><span class="t" style="left:58.80px;top:463px;transform:scaleX(0.9053)">05</span><span class="t" style="left:70.88px;top:463px;transform:scaleX(0.8572)">.</span><span class="t" style="left:73.74px;top:463px;transform:scaleX(0.9053)">2025</span><span class="t" style="left:101.54px;top:463px;transform:scaleX(0.9053)">8</span><span class="t" style="left:107.58px;top:463px;transform:scaleX(0.8572)">:</span><span class="t" style="left:110.44px;top:463px;transform:scaleX(0.9053)">34</span><span class="t" style="left:122.52px;top:463px;transform:scaleX(0.8572)">:</span><span class="t" style="left:125.38px;top:463px;transform:scaleX(0.9053)">39</span><span class="t" style="left:137.46px;top:463px;transform:scaleX(0.8572)">.</span><span class="t" style="left:140.32px;top:463px;transform:scaleX(0.9053)">502</span></div>
<div class="g" style="color:#f2f2f2"><span class="t" style="left:208.37px;top:463px;transform:scaleX(0.8560)">I</span></div>
<div class="g" style="color:#7b52c8"><span class="t" style="left:250.22px;top:463px;transform:scaleX(0.9923)">zygote</span><span class="t" style="left:285.30px;top:463px;transform:scaleX(0.8694)">64</span></div>
<div class="g" style="color:#f2f2f2"><span class="t" style="left:400.36px;top:463px;transform:scaleX(0.8945)">29339</span></div>
<div class="g" style="color:#f2f2f2"><span class="t" style="left:450.16px;top:463px;transform:scaleX(0.8933)">29356</span></div>
<div class="g" style="color:#f2f2f2"><span class="t" style="left:500.25px;top:463px;transform:scaleX(0.8555)">W</span><span class="t" style="left:509.94px;top:463px;transform:scaleX(1.0084)">ait</span><span class="t" style="left:522.72px;top:463px;transform:scaleX(0.8555)">F</span><span class="t" style="left:529.00px;top:463px;transform:scaleX(1.0084)">or</span><span class="t" style="left:539.76px;top:463px;transform:scaleX(0.8555)">G</span><span class="t" style="left:547.74px;top:463px;transform:scaleX(1.0084)">c</span><span class="t" style="left:553.79px;top:463px;transform:scaleX(0.8555)">T</span><span class="t" style="left:560.06px;top:463px;transform:scaleX(1.0084)">o</span><span class="t" style="left:566.79px;top:463px;transform:scaleX(0.8555)">C</span><span class="t" style="left:574.21px;top:463px;transform:scaleX(1.0084)">omplete</span><span class="t" style="left:620.80px;top:463px;transform:scaleX(1.0084)">blocked</span><span class="t" style="left:666.05px;top:463px;transform:scaleX(0.8555)">P</span><span class="t" style="left:672.90px;top:463px;transform:scaleX(1.0084)">rofile</span><span class="t" style="left:699.13px;top:463px;transform:scaleX(0.8555)">S</span><span class="t" style="left:705.97px;top:463px;transform:scaleX(1.0084)">aver</span><span class="t" style="left:733.06px;top:463px;transform:scaleX(1.0084)">on</span><span class="t" style="left:750.06px;top:463px;transform:scaleX(0.8555)">H</span><span class="t" style="left:757.47px;top:463px;transform:scaleX(1.0084)">eap</span><span class="t" style="left:777.66px;top:463px;transform:scaleX(0.8555)">T</span><span class="t" style="left:783.93px;top:463px;transform:scaleX(1.0084)">rim</span><span class="t" style="left:804.27px;top:463px;transform:scaleX(1.0084)">for</span><span class="t" style="left:821.94px;top:463px;transform:scaleX(0.8835)">26</span><span class="t" style="left:833.73px;top:463px;transform:scaleX(0.8365)">.</span><span class="t" style="left:836.52px;top:463px;transform:scaleX(0.8835)">730</span><span class="t" style="left:854.21px;top:463px;transform:scaleX(1.0084)">ms</span></div>
<div class="g" style="color:#f2f2f2"><span class="t" style="left:43.85px;top:482px;transform:scaleX(0.9052)">27</span><span class="t" style="left:55.94px;top:482px;transform:scaleX(0.8571)">.</span><span class="t" style="left:58.79px;top:482px;transform:scaleX(0.9052)">05</span><span class="t" style="left:70.88px;top:482px;transform:scaleX(0.8571)">.</span><span class="t" style="left:73.73px;top:482px;transform:scaleX(0.9052)">2025</span><span class="t" style="left:101.53px;top:482px;transform:scaleX(0.9052)">8</span><span class="t" style="left:107.57px;top:482px;transform:scaleX(0.8571)">:</span><span class="t" style="left:110.43px;top:482px;transform:scaleX(0.9052)">34</span><span class="t" style="left:122.51px;top:482px;transform:scaleX(0.8571)">:</span><span class="t" style="left:125.37px;top:482px;transform:scaleX(0.9052)">40</span><span class="t" style="left:137.45px;top:482px;transform:scaleX(0.8571)">.</span><span class="t" style="left:140.31px;top:482px;transform:scaleX(0.9052)">151</span></div>
<div class="g" style="color:#f2f2f2"><span class="t" style="left:208.37px;top:482px;transform:scaleX(0.8560)">I</span></div>
<div class="g" style="color:#3ec2dc"><span class="t" style="left:250.22px;top:482px;transform:scaleX(0.9923)">zygote</span><span class="t" style="left:285.30px;top:482px;transform:scaleX(0.8694)">64</span></div>
<div class="g" style="color:#f2f2f2"><span class="t" style="left:400.36px;top:482px;transform:scaleX(0.8917)">29400</span></div>
<div class="g" style="color:#f2f2f2"><span class="t" style="left:450.16px;top:482px;transform:scaleX(0.8933)">29416</span></div>
<div class="g" style="color:#f2f2f2"><span class="t" style="left:500.25px;top:482px;transform:scaleX(0.8577)">W</span><span class="t" style="left:509.97px;top:482px;transform:scaleX(1.0110)">aiting</span><span class="t" style="left:542.52px;top:482px;transform:scaleX(1.0110)">for</span><span class="t" style="left:560.23px;top:482px;transform:scaleX(1.0110)">a</span><span class="t" style="left:570.53px;top:482px;transform:scaleX(1.0110)">blocking</span><span class="t" style="left:618.59px;top:482px;transform:scaleX(0.8577)">GC</span><span class="t" style="left:637.58px;top:482px;transform:scaleX(0.8577)">P</span><span class="t" style="left:644.44px;top:482px;transform:scaleX(1.0110)">rofile</span><span class="t" style="left:670.74px;top:482px;transform:scaleX(0.8577)">S</span><span class="t" style="left:677.60px;top:482px;transform:scaleX(1.0110)">aver</span></div>
<div class="g" style="color:#f2f2f2"><span class="t" style="left:43.85px;top:501px;transform:scaleX(0.9046)">27</span><span class="t" style="left:55.93px;top:501px;transform:scaleX(0.8565)">.</span><span class="t" style="left:58.78px;top:501px;transform:scaleX(0.9046)">05</span><span class="t" style="left:70.86px;top:501px;transform:scaleX(0.8565)">.</span><span class="t" style="left:73.71px;top:501px;transform:scaleX(0.9046)">2025</span><span class="t" style="left:101.49px;top:501px;transform:scaleX(0.9046)">8</span><span class="t" style="left:107.53px;top:501px;transform:scaleX(0.8565)">:</span><span class="t" style="left:110.38px;top:501px;transform:scaleX(0.9046)">34</span><span class="t" style="left:122.46px;top:501px;transform:scaleX(0.8565)">:</span><span class="t" style="left:125.31px;top:501px;transform:scaleX(0.9046)">41</span><span class="t" style="left:137.39px;top:501px;transform:scaleX(0.8565)">.</span><span class="t" style="left:140.24px;top:501px;transform:scaleX(0.9046)">395</span></div>
<div class="g" style="color:#f2f2f2"><span class="t" style="left:206.77px;top:501px;transform:scaleX(0.8560)">E</span></div>
<div class="g" style="color:#5a62c0"><span class="t" style="left:250.22px;top:501px;transform:scaleX(0.8791)">SQL</span><span class="t" style="left:271.33px;top:501px;transform:scaleX(1.0362)">ite</span><span class="t" style="left:284.46px;top:501px;transform:scaleX(0.8791)">C</span><span class="t" style="left:292.08px;top:501px;transform:scaleX(1.0362)">onnection</span></div>
<div class="g" style="color:#f2f2f2"><span class="t" style="left:400.36px;top:501px;transform:scaleX(0.8955)">24172</span></div>
<div class="g" style="color:#f2f2f2"><span class="t" style="left:450.16px;top:501px;transform:scaleX(0.8927)">29075</span></div>
<div class="g" style="color:#ea4e44"><span class="t" style="left:500.13px;top:501px;transform:scaleX(1.0170)">flags</span><span class="t" style="left:525.91px;top:501px;transform:scaleX(0.8436)">:</span><span class="t" style="left:532.29px;top:501px;transform:scaleX(0.8910)">10000000</span><span class="t" style="left:579.86px;top:501px;transform:scaleX(0.8436)">,</span><span class="t" style="left:586.25px;top:501px;transform:scaleX(0.8628)">USE</span><span class="t" style="left:607.54px;top:500px;transform:scaleX(0.7318)">_</span><span class="t" style="left:612.42px;top:501px;transform:scaleX(0.8628)">WAL</span><span class="t" style="left:638.43px;top:501px;transform:scaleX(0.8436)">:</span><span class="t" style="left:644.81px;top:501px;transform:scaleX(1.0170)">true</span></div>
<div class="clip" style="left:34px;top:84px;width:915px;height:441px;color:#f2f2f2"><span class="t" style="left:9.85px;top:-20px;transform:scaleX(0.9048)">27</span><span class="t" style="left:21.93px;top:-20px;transform:scaleX(0.8566)">.</span><span class="t" style="left:24.79px;top:-20px;transform:scaleX(0.9048)">05</span><span class="t" style="left:36.86px;top:-20px;transform:scaleX(0.8566)">.</span><span class="t" style="left:39.72px;top:-20px;transform:scaleX(0.9048)">2025</span><span class="t" style="left:67.50px;top:-20px;transform:scaleX(0.9048)">8</span><span class="t" style="left:73.54px;top:-20px;transform:scaleX(0.8566)">:</span><span class="t" style="left:76.39px;top:-20px;transform:scaleX(0.9048)">34</span><span class="t" style="left:88.47px;top:-20px;transform:scaleX(0.8566)">:</span><span class="t" style="left:91.33px;top:-20px;transform:scaleX(0.9048)">39</span><span class="t" style="left:103.40px;top:-20px;transform:scaleX(0.8566)">.</span><span class="t" style="left:106.26px;top:-20px;transform:scaleX(0.9048)">108</span></div>
<div class="clip" style="left:34px;top:84px;width:915px;height:441px;color:#f2f2f2"><span class="t" style="left:172.42px;top:-20px;transform:scaleX(0.8560)">D</span></div>
<div class="clip" style="left:34px;top:84px;width:915px;height:441px;color:#ec7446"><span class="t" style="left:215.84px;top:-20px;transform:scaleX(0.8766)">L</span><span class="t" style="left:221.69px;top:-20px;transform:scaleX(1.0333)">oaded</span><span class="t" style="left:256.17px;top:-20px;transform:scaleX(0.8766)">A</span><span class="t" style="left:263.19px;top:-20px;transform:scaleX(1.0333)">pk</span></div>
<div class="clip" style="left:34px;top:84px;width:915px;height:441px;color:#f2f2f2"><span class="t" style="left:366.07px;top:-20px;transform:scaleX(0.9028)">1573</span></div>
<div class="clip" style="left:34px;top:84px;width:915px;height:441px;color:#f2f2f2"><span class="t" style="left:415.87px;top:-20px;transform:scaleX(0.9108)">1573</span></div>
<div class="clip" style="left:34px;top:84px;width:915px;height:441px;color:#f2f2f2"><span class="t" style="left:465.97px;top:-20px;transform:scaleX(0.8579)">ZTEPOINT</span><span class="t" style="left:516.87px;top:-21px;transform:scaleX(0.7276)">_</span><span class="t" style="left:521.73px;top:-20px;transform:scaleX(0.8579)">BR</span><span class="t" style="left:536.03px;top:-21px;transform:scaleX(0.7276)">_</span><span class="t" style="left:540.89px;top:-20px;transform:scaleX(0.8579)">STATS</span><span class="t" style="left:574.06px;top:-20px;transform:scaleX(0.8388)">|</span><span class="t" style="left:576.68px;top:-20px;transform:scaleX(1.0112)">finish</span><span class="t" style="left:608.56px;top:-20px;transform:scaleX(1.0112)">register</span><span class="t" style="left:649.02px;top:-20px;transform:scaleX(0.8388)">:</span><span class="t" style="left:651.81px;top:-20px;transform:scaleX(1.0112)">com</span><span class="t" style="left:674.74px;top:-20px;transform:scaleX(0.8388)">.</span><span class="t" style="left:677.53px;top:-20px;transform:scaleX(1.0112)">android</span><span class="t" style="left:718.01px;top:-20px;transform:scaleX(0.8388)">.</span><span class="t" style="left:720.81px;top:-20px;transform:scaleX(1.0112)">server</span><span class="t" style="left:754.53px;top:-20px;transform:scaleX(0.8388)">.</span><span class="t" style="left:757.32px;top:-20px;transform:scaleX(0.8579)">L</span><span class="t" style="left:763.05px;top:-20px;transform:scaleX(1.0112)">ocation</span><span class="t" style="left:802.18px;top:-20px;transform:scaleX(0.8579)">M</span><span class="t" style="left:810.75px;top:-20px;transform:scaleX(1.0112)">anager</span><span class="t" style="left:848.54px;top:-20px;transform:scaleX(0.8579)">S</span><span class="t" style="left:855.40px;top:-20px;transform:scaleX(1.0112)">ervice</span><span class="t" style="left:887.77px;top:-20px;transform:scaleX(0.8759)">$</span><span class="t" style="left:893.62px;top:-20px;transform:scaleX(0.8859)">2</span><span class="t" style="left:899.53px;top:-20px;transform:scaleX(0.8388)">...</span></div>
</body></html>
